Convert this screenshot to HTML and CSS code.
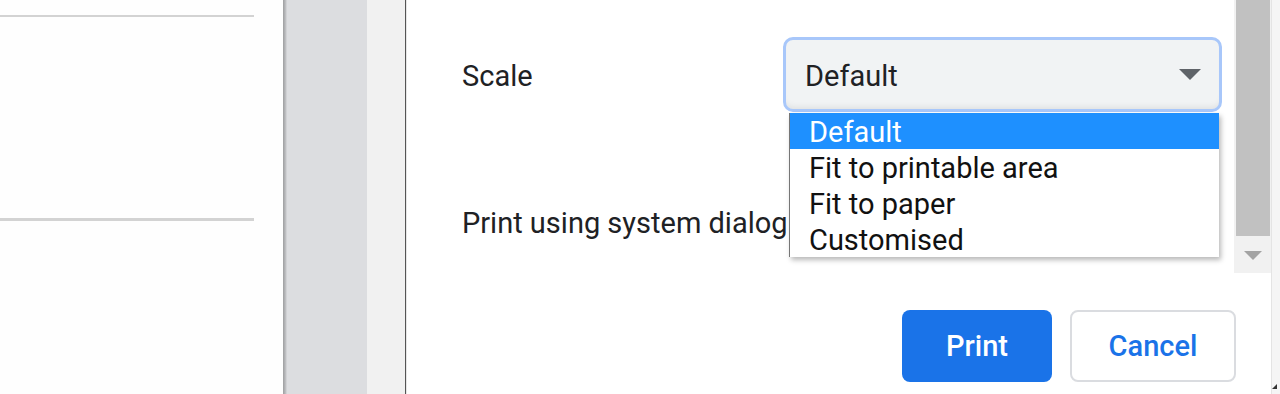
FILE: index.html
```html
<!DOCTYPE html>
<html lang="en">
<head>
<meta charset="utf-8">
<title>Print</title>
<link rel="stylesheet" href="styles.css">
</head>
<body>
  <div class="page-pane">
    <div class="rule rule-top"></div>
    <div class="rule rule-mid"></div>
  </div>
  <div class="gutter"></div>
  <div class="margin-strip"></div>
  <div class="dialog">
    <div class="scroll-area">
      <div class="settings">
        <div class="row row-scale">
          <div class="label">Scale</div>
          <div class="select">
            <span class="select-value">Default</span>
            <span class="select-arrow"></span>
            <ul class="options">
              <li class="option selected">Default</li>
              <li class="option">Fit to printable area</li>
              <li class="option">Fit to paper</li>
              <li class="option">Customised</li>
            </ul>
          </div>
        </div>
        <div class="row row-system">
          <div class="label">Print using system dialog</div>
        </div>
      </div>
      <div class="scrollbar">
        <div class="thumb"></div>
        <div class="arrow-btn"><span class="arrow-down"></span></div>
      </div>
    </div>
    <div class="footer">
      <button class="btn btn-primary">Print</button>
      <button class="btn btn-secondary">Cancel</button>
    </div>
  </div>
  <div class="edge-strip"><span class="grip"></span></div>
</body>
</html>
```

FILE: styles.css
```css
html, body {
  margin: 0;
  padding: 0;
}
body {
  width: 1280px;
  height: 394px;
  overflow: hidden;
  display: flex;
  background: #fff;
  font-family: Roboto, "Liberation Sans", sans-serif;
  color: #202124;
}

.page-pane {
  width: 283px;
  flex: none;
  background: #fefefe;
  display: flex;
  flex-direction: column;
}
.rule {
  width: 254px;
  height: 2px;
  background: #d3d3d3;
}
.rule-top { margin-top: 15px; }
.rule-mid { margin-top: 201px; height: 3px; }

.gutter {
  width: 84px;
  flex: none;
  background: linear-gradient(to right, #9f9fa1 0, #a9aaac 1px, #c4c5c8 3px, #dcdde0 4px, #dcdde0 100%);
}
.margin-strip {
  width: 38px;
  flex: none;
  background: #f1f1f1;
  border-right: 1px solid #555;
}

.dialog {
  width: 864px;
  flex: none;
  border-left: 1px solid #e6e6e6;
  display: flex;
  flex-direction: column;
  background: #fff;
}
.scroll-area {
  height: 273px;
  display: flex;
}
.settings {
  flex: 1;
  padding-left: 55px;
}
.row {
  display: flex;
  align-items: center;
  height: 75px;
  font-size: 29px;
}
.row-scale { margin-top: 37px; }
.row-system { margin-top: 72px; }
.label {
  width: 321px;
  flex: none;
  white-space: nowrap;
  color: #202124;
  padding-top: 2px;
}

.select {
  position: relative;
  box-sizing: border-box;
  width: 439px;
  height: 75px;
  border: 3px solid #a8c7fa;
  border-radius: 10px;
  background: #f1f3f4;
  box-shadow: inset 0 -6px 6px -4px rgba(0,0,0,0.08);
  display: flex;
  align-items: center;
  justify-content: space-between;
  padding: 0 18px 0 19px;
  font-size: 29px;
  color: #202124;
}
.select-value { padding-top: 2px; }
.select-arrow {
  width: 0;
  height: 0;
  border-left: 11.5px solid transparent;
  border-right: 11.5px solid transparent;
  border-top: 11px solid #5f6368;
}
.options {
  position: absolute;
  left: 3px;
  top: 73px;
  width: 429px;
  margin: 0;
  padding: 0;
  list-style: none;
  background: #fff;
  border-left: 1px solid #767676;
  box-shadow: 2px 3px 5px rgba(0,0,0,0.28);
  z-index: 2;
}
.option {
  height: 36px;
  line-height: 38px;
  padding-left: 19px;
  font-size: 29px;
  color: #111;
  white-space: nowrap;
}
.option.selected {
  background: #1e90ff;
  color: #fff;
}

.scrollbar {
  width: 37px;
  flex: none;
  background: #f1f1f1;
  display: flex;
  flex-direction: column;
}
.thumb {
  height: 236px;
  margin-left: 2px;
  width: 34px;
  background: #c1c1c1;
}
.arrow-btn {
  flex: 1;
  display: flex;
  align-items: center;
  justify-content: center;
}
.arrow-down {
  width: 0;
  height: 0;
  border-left: 9px solid transparent;
  border-right: 9px solid transparent;
  border-top: 9px solid #a3a3a3;
  margin-top: 2px;
}

.footer {
  display: flex;
  justify-content: flex-end;
  gap: 18px;
  padding: 37px 35px 0 0;
}
.btn {
  box-sizing: border-box;
  height: 72px;
  border-radius: 8px;
  font-family: Roboto, "Liberation Sans", sans-serif;
  font-size: 29px;
  font-weight: 500;
  cursor: pointer;
}
.btn-primary {
  width: 150px;
  background: #1a73e8;
  border: none;
  color: #fff;
}
.btn-secondary {
  width: 166px;
  background: #fff;
  border: 2px solid #dadce0;
  color: #1a73e8;
}

.edge-strip {
  flex: 1;
  background: #f5f5f5;
  border-left: 1px solid #e4e4e4;
  display: flex;
  flex-direction: column;
  justify-content: flex-end;
  align-items: flex-start;
}
.grip {
  width: 0;
  height: 0;
  border-left: 5px solid transparent;
  border-bottom: 5px solid #333;
  margin: 0 0 5px 0;
}
```
